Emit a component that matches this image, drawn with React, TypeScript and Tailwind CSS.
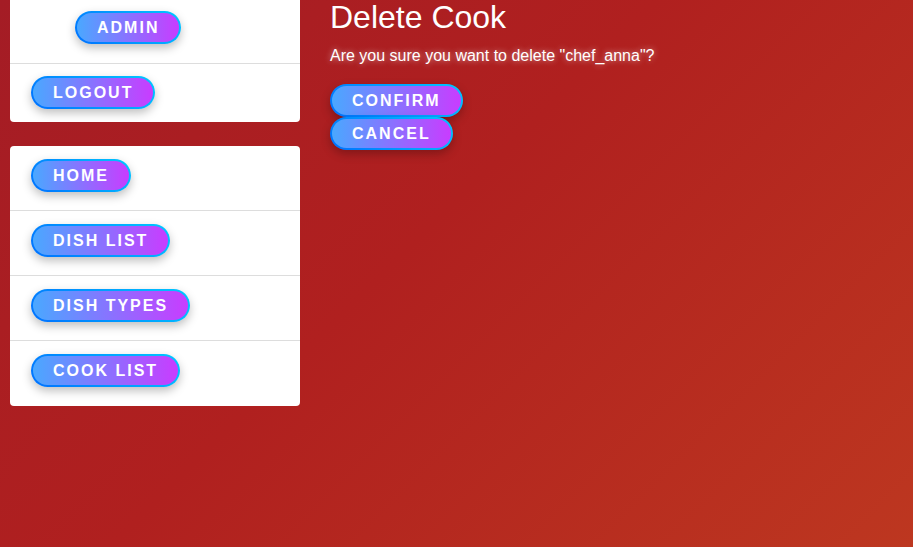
import React from 'react';

const btn =
    "inline-flex items-center h-[33px] px-[20px] rounded-full border-2 border-transparent text-white font-bold uppercase text-[16px] tracking-[2px] leading-none shadow-[0_4px_10px_rgba(0,0,0,0.25)] [background:linear-gradient(90deg,#4aa8ff,#c93cff)_padding-box,linear-gradient(45deg,#0070ff,#00c8ff)_border-box]";

const Pill: React.FC<{ label: string }> = ({ label }) => (
    <button className={btn} style={{ fontFamily: '"Liberation Sans", Arial, sans-serif' }}>{label}</button>
);

const navItems = ['Home', 'Dish List', 'Dish Types', 'Cook List'];

export default function App() {
    return (
        <div
            className="min-h-[547px] w-full flex gap-[30px] pl-[10px] bg-[linear-gradient(135deg,#a41c25_0%,#b0201f_45%,#bd3720_100%)]"
            style={{ fontFamily: '"Liberation Sans", Arial, sans-serif' }}
        >
            {/* Sidebar */}
            <aside className="w-[290px] flex flex-col gap-[24px] shrink-0">
                <div className="bg-white rounded-b-[4px] -mt-[2px]">
                    <div className="h-[66px] pt-[13px] pl-[65px] border-b border-[#dddddd]">
                        <Pill label="Admin" />
                    </div>
                    <div className="h-[58px] pt-[12px] pl-[21px]">
                        <Pill label="Logout" />
                    </div>
                </div>
                <div className="bg-white rounded-[4px]">
                    {navItems.map((item, i) => (
                        <div
                            key={item}
                            className={`h-[65px] pt-[13px] pl-[21px] ${i < navItems.length - 1 ? 'border-b border-[#dddddd]' : ''}`}
                        >
                            <Pill label={item} />
                        </div>
                    ))}
                </div>
            </aside>

            {/* Content */}
            <main className="text-white">
                <h1 className="text-[32px] leading-[34px] font-normal">Delete Cook</h1>
                <p className="mt-[13px] text-[16px] leading-[18px] [text-shadow:0_0_6px_rgba(255,255,255,0.6)]">
                    Are you sure you want to delete "chef_anna"?
                </p>
                <div className="mt-[19px] flex flex-col items-start gap-0">
                    <Pill label="Confirm" />
                    <Pill label="Cancel" />
                </div>
            </main>
        </div>
    );
}
